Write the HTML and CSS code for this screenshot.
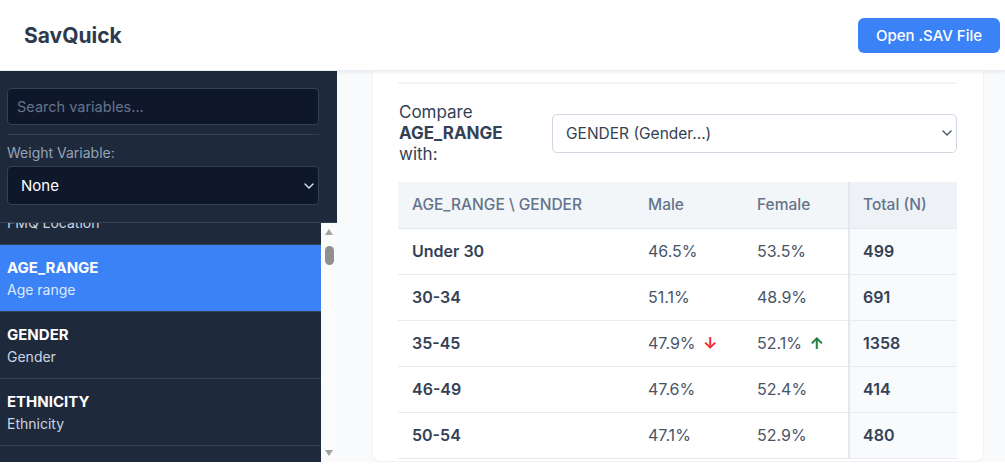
FILE: index.html
```html
<!DOCTYPE html>
<html lang="en">
<head>
<meta charset="utf-8">
<title>SavQuick</title>
<link rel="stylesheet" href="styles.css">
</head>
<body>
<div class="app">
  <header class="topbar">
    <h1 class="brand">SavQuick</h1>
    <button class="open-btn" type="button">Open .SAV File</button>
  </header>
  <div class="workspace">
    <aside class="sidebar">
      <div class="sidebar-controls">
        <input class="search" type="text" placeholder="Search variables...">
        <hr class="divider">
        <label class="weight-label" for="weight">Weight Variable:</label>
        <div class="select-wrap">
          <select class="weight-select" id="weight"><option>None</option></select>
          <svg class="chevron chevron-light" width="10" height="6" viewBox="0 0 10 6" aria-hidden="true"><path d="M1 1l4 4 4-4" fill="none" stroke="currentColor" stroke-width="1.4" stroke-linecap="round" stroke-linejoin="round"/></svg>
        </div>
      </div>
      <div class="list-area">
        <ul class="var-list" id="varList">
          <li class="var-item"><span class="var-name">RESPID</span><span class="var-desc">Respondent ID</span></li>
          <li class="var-item"><span class="var-name">WAVE</span><span class="var-desc">Survey wave</span></li>
          <li class="var-item" id="fmq"><span class="var-name">FMQ_LOC</span><span class="var-desc">FMQ Location</span></li>
          <li class="var-item is-active"><span class="var-name">AGE_RANGE</span><span class="var-desc">Age range</span></li>
          <li class="var-item"><span class="var-name">GENDER</span><span class="var-desc">Gender</span></li>
          <li class="var-item"><span class="var-name">ETHNICITY</span><span class="var-desc">Ethnicity</span></li>
          <li class="var-item"><span class="var-name">EDUCATION</span><span class="var-desc">Education level</span></li>
          <li class="var-item"><span class="var-name">INCOME</span><span class="var-desc">Household income</span></li>
          <li class="var-item"><span class="var-name">REGION</span><span class="var-desc">Region</span></li>
          <li class="var-item"><span class="var-name">URBAN</span><span class="var-desc">Urban / rural</span></li>
        </ul>
        <div class="rail" aria-hidden="true">
          <span class="rail-btn"><span class="tri tri-up"></span></span>
          <span class="rail-track"><span class="rail-thumb"></span></span>
          <span class="rail-btn"><span class="tri tri-down"></span></span>
        </div>
      </div>
    </aside>
    <main class="main" id="main">
      <section class="card">
        <div class="card-head" id="cardHead">
          <h2 class="var-title">AGE_RANGE</h2>
          <p class="var-sub">Age range</p>
        </div>
        <div class="compare-row">
          <div class="compare-label">Compare<br><strong>AGE_RANGE</strong><br>with:</div>
          <div class="select-wrap compare-wrap">
            <select class="compare-select"><option>GENDER (Gender...)</option></select>
            <svg class="chevron chevron-dark" width="10" height="6" viewBox="0 0 10 6" aria-hidden="true"><path d="M1 1l4 4 4-4" fill="none" stroke="currentColor" stroke-width="1.4" stroke-linecap="round" stroke-linejoin="round"/></svg>
          </div>
        </div>
        <table class="crosstab">
          <thead>
            <tr>
              <th>AGE_RANGE \ GENDER</th>
              <th>Male</th>
              <th>Female</th>
              <th class="total">Total (N)</th>
            </tr>
          </thead>
          <tbody>
            <tr><td class="row-label">Under 30</td><td>46.5%</td><td>53.5%</td><td class="total">499</td></tr>
            <tr><td class="row-label">30-34</td><td>51.1%</td><td>48.9%</td><td class="total">691</td></tr>
            <tr><td class="row-label">35-45</td><td>47.9% <span class="sig down">↓</span></td><td>52.1% <span class="sig up">↑</span></td><td class="total">1358</td></tr>
            <tr><td class="row-label">46-49</td><td>47.6%</td><td>52.4%</td><td class="total">414</td></tr>
            <tr><td class="row-label">50-54</td><td>47.1%</td><td>52.9%</td><td class="total">480</td></tr>
          </tbody>
        </table>
      </section>
    </main>
  </div>
</div>
<script src="script.js"></script>
</body>
</html>
```

FILE: styles.css
```css
* { box-sizing: border-box; }

html, body {
  margin: 0;
  padding: 0;
  background: #ffffff;
  font-family: Inter, "Noto Sans", "DejaVu Sans", sans-serif;
  color: #334155;
}

.app {
  height: 462px;
  display: flex;
  flex-direction: column;
  overflow: hidden;
}

.topbar {
  flex: 0 0 71px;
  display: flex;
  align-items: center;
  justify-content: space-between;
  padding: 0 5px 0 24px;
  background: #ffffff;
  border-bottom: 1px solid #e8edf3;
  box-shadow: 0 1px 4px rgba(15, 23, 42, 0.08);
  position: relative;
  z-index: 2;
}

.brand {
  margin: 0;
  font-size: 21px;
  font-weight: 700;
  color: #2d3a4e;
}

.open-btn {
  width: 142px;
  height: 35px;
  border: none;
  border-radius: 6px;
  background: #3b82f6;
  color: #ffffff;
  font-family: inherit;
  font-size: 15px;
  font-weight: 500;
}

.workspace {
  flex: 1;
  display: flex;
  min-height: 0;
}

/* Sidebar */
.sidebar {
  flex: 0 0 337px;
  display: flex;
  flex-direction: column;
  background: #1e293b;
  min-height: 0;
}

.sidebar-controls {
  flex: none;
  padding: 17px 18px 17px 7px;
  border-bottom: 1px solid #334155;
}

.search {
  display: block;
  width: 100%;
  height: 37px;
  padding: 0 9px;
  background: #0f172a;
  border: 1px solid #334155;
  border-radius: 4px;
  color: #e2e8f0;
  font-family: inherit;
  font-size: 14.5px;
}

.search::placeholder { color: #64748b; }

.divider {
  margin: 9px 0 0;
  border: none;
  border-top: 1px solid #334155;
}

.weight-label {
  display: block;
  margin-top: 8px;
  line-height: 20px;
  font-size: 14px;
  color: #94a3b8;
}

.select-wrap {
  position: relative;
  margin-top: 3px;
}

.chevron {
  position: absolute;
  right: 5px;
  top: 50%;
  margin-top: -3px;
  pointer-events: none;
}

.chevron-light { color: #e2e8f0; }
.chevron-dark { color: #475569; }

.weight-select {
  display: block;
  width: 100%;
  height: 39px;
  padding: 0 13px;
  -webkit-appearance: none;
  appearance: none;
  background: #0f172a;
  border: 1px solid #334155;
  border-radius: 4px;
  color: #ffffff;
  font-family: inherit;
  font-size: 15px;
}

.list-area {
  flex: 1;
  min-height: 0;
  display: flex;
}

.var-list {
  flex: 1;
  min-width: 0;
  margin: 0;
  padding: 0;
  list-style: none;
  overflow: hidden;
}

.var-item {
  display: flex;
  flex-direction: column;
  gap: 2px;
  padding: 13px 7px 11px;
  border-bottom: 1px solid #334155;
}

.var-name {
  line-height: 20px;
  font-size: 15px;
  font-weight: 700;
  color: #ffffff;
}

.var-desc {
  line-height: 20px;
  font-size: 14px;
  color: #cbd5e1;
}

.var-item.is-active { background: #3b82f6; }
.var-item.is-active .var-desc { color: #dbeafe; }

/* Faux classic scrollbar of the variable list */
.rail {
  flex: 0 0 16px;
  display: flex;
  flex-direction: column;
  background: #fbfbfb;
  padding-bottom: 1px;
}

.rail-btn {
  flex: 0 0 17px;
  display: flex;
  align-items: center;
  justify-content: center;
}

.rail-track {
  flex: 1;
  display: flex;
  justify-content: center;
  padding-top: 6px;
}

.rail-thumb {
  width: 9px;
  height: 19px;
  border-radius: 5px;
  background: #8f8f8f;
}

.tri {
  width: 0;
  height: 0;
  border-left: 4.5px solid transparent;
  border-right: 4.5px solid transparent;
}

.tri-up { border-bottom: 6px solid #a3a3a3; }
.tri-down { border-top: 6px solid #a3a3a3; }

/* Main */
.main {
  flex: 1;
  min-width: 0;
  background: #f8fafc;
  overflow: hidden;
  padding: 36px 22px 1px 36px;
}

.card {
  background: #ffffff;
  border-radius: 8px;
  box-shadow: 0 1px 3px rgba(15, 23, 42, 0.06);
  padding: 25px 26px 2px 25px;
}

.card-head {
  padding-bottom: 16px;
  border-bottom: 2px solid #f1f5f9;
}

.var-title {
  margin: 0;
  font-size: 22px;
  font-weight: 700;
  color: #1e293b;
}

.var-sub {
  margin: 4px 0 0;
  font-size: 15px;
  color: #64748b;
}

.compare-row {
  display: flex;
  align-items: center;
  gap: 14px;
  margin-top: 17px;
}

.compare-label {
  flex: 0 0 140px;
  padding-left: 1px;
  padding-top: 1px;
  font-size: 17px;
  line-height: 21px;
  color: #334155;
}

.compare-label strong { font-weight: 700; }

.compare-wrap {
  flex: 1;
  margin-top: 0;
}

.compare-select {
  display: block;
  width: 100%;
  height: 39px;
  padding: 0 13px;
  -webkit-appearance: none;
  appearance: none;
  background: #ffffff;
  border: 1px solid #cfd8e3;
  border-radius: 5px;
  color: #334155;
  font-family: inherit;
  font-size: 15.5px;
}

.crosstab {
  width: 100%;
  margin-top: 17px;
  border-collapse: collapse;
  table-layout: fixed;
  font-size: 16px;
}

.crosstab th:nth-child(1) { width: 236px; }
.crosstab th:nth-child(2) { width: 109px; }
.crosstab th:nth-child(3) { width: 106px; }

.crosstab th {
  height: 46px;
  padding: 0 14px;
  text-align: left;
  font-size: 15.5px;
  font-weight: 500;
  color: #64748b;
  background: #f3f6f9;
  border-bottom: 1px solid #e2e8f0;
}

.crosstab td {
  height: 46px;
  padding: 0 14px;
  color: #475569;
  border-bottom: 1px solid #e6ebf1;
}

.crosstab .row-label {
  font-weight: 600;
  color: #334155;
}

.crosstab .total {
  border-left: 2px solid #e2e8f0;
  padding-left: 13px;
}

.crosstab td.total {
  background: #f8fafc;
  font-weight: 600;
  color: #334155;
}

.crosstab th.total { background: #eef2f6; }

.sig {
  margin-left: 3px;
  font-weight: 700;
}

.sig.down { color: #ef2b2b; }
.sig.up { color: #15803d; }
```

FILE: script.js
```js
var list = document.getElementById('varList');
var fmq = document.getElementById('fmq');
list.scrollTop += fmq.getBoundingClientRect().bottom - 245;

var main = document.getElementById('main');
var head = document.getElementById('cardHead');
main.scrollTop += head.getBoundingClientRect().bottom - 84;
```
